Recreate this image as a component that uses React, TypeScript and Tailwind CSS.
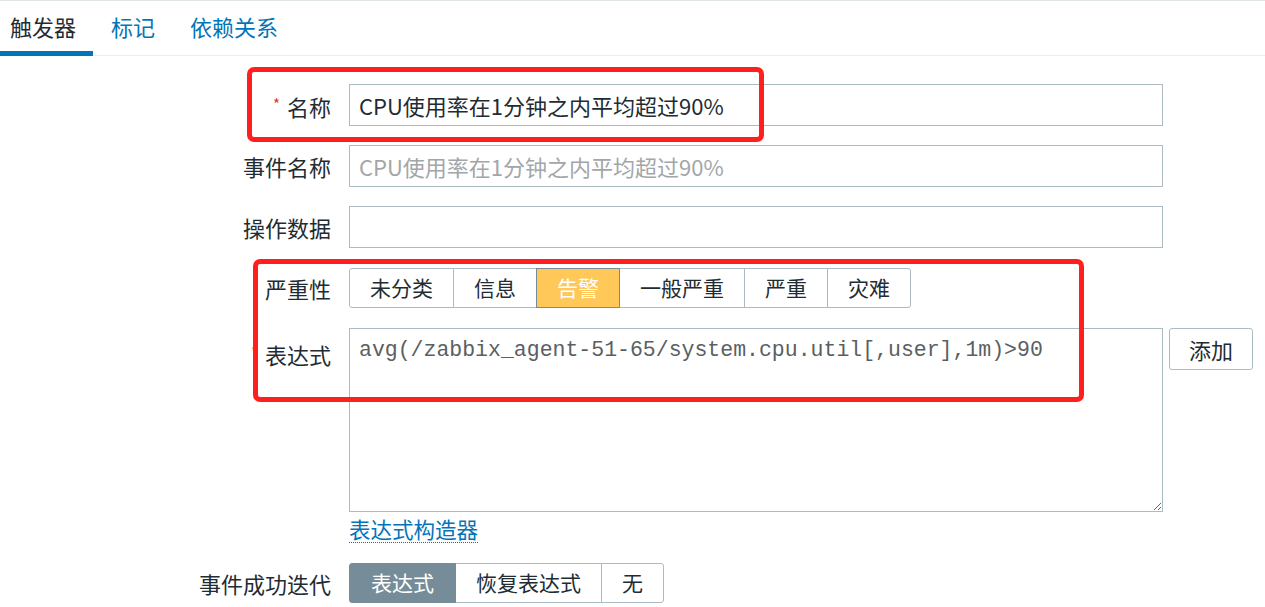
import React from 'react';

const severities = ['未分类', '信息', '告警', '一般严重', '严重', '灾难'];
const recovery = ['表达式', '恢复表达式', '无'];

function Label({ children, required }: { children: React.ReactNode; required?: boolean }) {
  return (
    <div className="w-[331px] shrink-0 text-right text-[22px] leading-[28px] text-[#1f2c33]">
      {required && <span className="mr-[7px] align-[6px] text-[15px] text-[#e33734]">*</span>}
      {children}
    </div>
  );
}

export default function App() {
  return (
    <div
      className="relative min-h-screen overflow-hidden border-t border-[#dfe4e7] bg-white text-[#1f2c33]"
      style={{ fontFamily: "'Noto Sans CJK SC', 'Liberation Sans', sans-serif" }}
    >
      {/* Tabs */}
      <ul className="flex border-b border-[#ebeef0]">
        <li className="-mb-px flex h-[55px] w-[93px] items-center border-b-[5px] border-[#0275b8] pl-[10px] text-[22px] text-[#1f2c33]">
          触发器
        </li>
        <li className="-mb-px flex h-[55px] items-center border-b-[5px] border-transparent pl-[18px] pr-[17px] text-[22px] text-[#0275b8]">
          标记
        </li>
        <li className="-mb-px flex h-[55px] items-center border-b-[5px] border-transparent pl-[18px] text-[22px] text-[#0275b8]">
          依赖关系
        </li>
      </ul>

      {/* Form */}
      <div className="flex flex-col pt-[28px]">
        <div className="flex items-center">
          <Label required>名称</Label>
          <input
            readOnly
            value="CPU使用率在1分钟之内平均超过90%"
            className="ml-[18px] h-[42px] w-[814px] border border-[#acbbc2] px-[9px] text-[22px] text-[#1f2c33] outline-none"
          />
        </div>

        <div className="mt-[19px] flex items-center">
          <Label>事件名称</Label>
          <input
            readOnly
            placeholder="CPU使用率在1分钟之内平均超过90%"
            className="ml-[18px] h-[42px] w-[814px] border border-[#acbbc2] px-[9px] text-[22px] text-[#1f2c33] outline-none placeholder:text-[#a3a6a8]"
          />
        </div>

        <div className="mt-[19px] flex items-center">
          <Label>操作数据</Label>
          <input
            readOnly
            className="ml-[18px] h-[42px] w-[814px] border border-[#acbbc2] px-[9px] text-[22px] outline-none"
          />
        </div>

        <div className="mt-[20px] flex items-center">
          <Label>严重性</Label>
          <div className="ml-[18px] flex">
            {severities.map((s, i) => (
              <div
                key={s}
                className={
                  'flex h-[40px] items-center border px-[20px] text-[21px] ' +
                  (i > 0 ? '-ml-px ' : 'rounded-l-[3px] ') +
                  (i === severities.length - 1 ? 'rounded-r-[3px] ' : '') +
                  (s === '告警'
                    ? 'relative z-10 border-[#768d99] bg-[#ffc859] text-white'
                    : 'border-[#acbbc2] bg-white text-[#1f2c33]')
                }
              >
                {s}
              </div>
            ))}
          </div>
        </div>

        <div className="mt-[20px] flex items-start">
          <div className="pt-[10px]">
            <Label required>表达式</Label>
          </div>
          <textarea
            readOnly
            defaultValue="avg(/zabbix_agent-51-65/system.cpu.util[,user],1m)>90"
            className="ml-[18px] h-[184px] w-[814px] border border-[#acbbc2] px-[9px] py-[8px] text-[21.5px] leading-[26px] text-[#5a5f62] outline-none"
            style={{ fontFamily: "'Liberation Mono', monospace" }}
          />
          <button className="ml-[6px] h-[42px] w-[84px] rounded-[3px] border border-[#acbbc2] bg-white text-[22px] text-[#1f2c33]">
            添加
          </button>
        </div>

        <div className="mt-[3px] flex">
          <div className="w-[331px] shrink-0" />
          <span className="ml-[18px] border-b border-dotted border-[#0275b8] text-[21.5px] leading-[27px] text-[#0275b8]">
            表达式构造器
          </span>
        </div>

        <div className="mt-[20px] flex items-center">
          <Label>事件成功迭代</Label>
          <div className="ml-[18px] flex">
            {recovery.map((s, i) => (
              <div
                key={s}
                className={
                  'flex h-[40px] items-center border text-[21px] ' +
                  (i > 0 ? '-ml-px px-[20px] ' : 'rounded-l-[3px] px-[21px] ') +
                  (i === recovery.length - 1 ? 'rounded-r-[3px] ' : '') +
                  (i === 0
                    ? 'relative z-10 border-[#768d99] bg-[#768d99] text-white'
                    : 'border-[#acbbc2] bg-white text-[#1f2c33]')
                }
              >
                {s}
              </div>
            ))}
          </div>
        </div>
      </div>

      {/* Red highlight boxes */}
      <div className="pointer-events-none absolute left-[247px] top-[66px] h-[75px] w-[517px] rounded-[7px] border-[5px] border-[#ff1f1f]" />
      <div className="pointer-events-none absolute left-[253px] top-[258px] h-[143px] w-[831px] rounded-[7px] border-[5px] border-[#ff1f1f]" />
    </div>
  );
}
